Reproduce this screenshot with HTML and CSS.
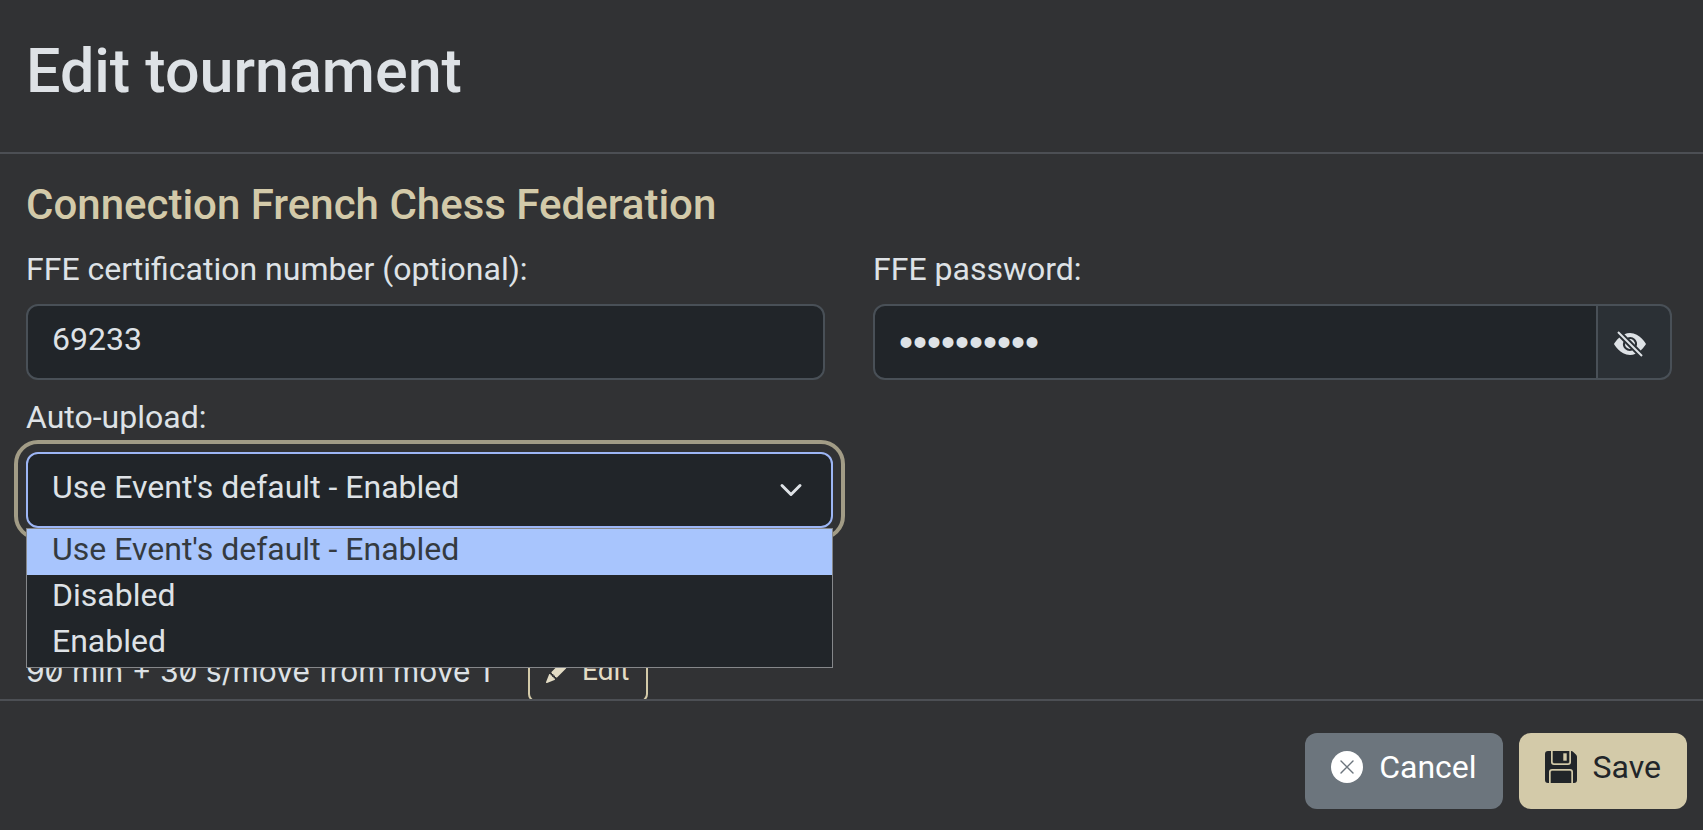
FILE: index.html
```html
<!DOCTYPE html>
<html lang="en">
<head>
<meta charset="utf-8">
<title>Edit tournament</title>
<link rel="stylesheet" href="styles.css">
</head>
<body>
<form class="modal">
  <header class="modal-header">
    <h1 class="modal-title">Edit tournament</h1>
  </header>
  <main class="modal-body">
    <h2 class="section-title">Connection French Chess Federation</h2>
    <div class="row">
      <div class="field">
        <label class="label" for="ffe-id">FFE certification number (optional):</label>
        <input class="control" id="ffe-id" type="text" value="69233">
      </div>
      <div class="field">
        <label class="label" for="ffe-password">FFE password:</label>
        <div class="input-group">
          <input class="control control-password" id="ffe-password" type="password" value="abcdefghij">
          <button class="reveal" type="button" aria-label="Show password">
            <svg class="icon" viewBox="0 0 16 16" fill="currentColor" aria-hidden="true"><path d="m10.79 12.912-1.614-1.615a3.5 3.5 0 0 1-4.474-4.474l-2.06-2.06C.938 6.278 0 8 0 8s3 5.5 8 5.5a7 7 0 0 0 2.79-.588M5.21 3.088A7 7 0 0 1 8 2.5c5 0 8 5.5 8 5.5s-.939 1.721-2.641 3.238l-2.062-2.062a3.5 3.5 0 0 0-4.474-4.474z"/><path d="M5.525 7.646a2.5 2.5 0 0 0 2.829 2.829zm4.95.708-2.829-2.83a2.5 2.5 0 0 1 2.829 2.829zm3.171 6-12-12 .708-.708 12 12z"/></svg>
          </button>
        </div>
      </div>
    </div>
    <div class="select-field">
      <label class="label" for="auto-upload">Auto-upload:</label>
      <div class="select-wrap">
        <select class="control select" id="auto-upload">
          <option>Use Event's default - Enabled</option>
          <option>Disabled</option>
          <option>Enabled</option>
        </select>
        <svg class="chevron" viewBox="0 0 16 16" fill="none" stroke="currentColor" stroke-width="2" stroke-linecap="round" stroke-linejoin="round" aria-hidden="true"><path d="m2 5 6 6 6-6"/></svg>
        <ul class="menu" role="listbox" aria-label="Auto-upload">
          <li class="menu-item menu-item-active" role="option" aria-selected="true">Use Event's default - Enabled</li>
          <li class="menu-item" role="option" aria-selected="false">Disabled</li>
          <li class="menu-item" role="option" aria-selected="false">Enabled</li>
        </ul>
      </div>
    </div>
    <div class="time-row">
      <span class="time-control">90 min + 30 s/move from move 1</span>
      <button class="edit" type="button">
        <svg class="edit-icon" viewBox="0 0 16 16" fill="currentColor" aria-hidden="true"><path d="M12.854.146a.5.5 0 0 0-.707 0L10.5 1.793 14.207 5.5l1.647-1.646a.5.5 0 0 0 0-.708zm.646 6.061L9.793 2.5 3.293 9H3.5a.5.5 0 0 1 .5.5v.5h.5a.5.5 0 0 1 .5.5v.5h.5a.5.5 0 0 1 .5.5v.5h.5a.5.5 0 0 1 .5.5v.207zm-7.468 7.468A.5.5 0 0 1 6 13.5V13h-.5a.5.5 0 0 1-.5-.5V12h-.5a.5.5 0 0 1-.5-.5V11h-.5a.5.5 0 0 1-.5-.5V10h-.5a.5.5 0 0 1-.175-.032l-.179.178a.5.5 0 0 0-.11.168l-2 5a.5.5 0 0 0 .65.65l5-2a.5.5 0 0 0 .168-.11z"/></svg>
        Edit
      </button>
    </div>
  </main>
  <footer class="modal-footer">
    <button class="button button-cancel" type="button">
      <svg class="icon" viewBox="0 0 16 16" aria-hidden="true"><circle cx="8" cy="8" r="8" fill="currentColor"/><path d="m5 5 6 6m0-6-6 6" stroke="#6c757d" stroke-width=".7" stroke-linecap="round"/></svg>
      Cancel
    </button>
    <button class="button button-save" type="submit">
      <svg class="icon" viewBox="0 0 16 16" fill="currentColor" aria-hidden="true"><path d="M0 1.500A1.500 1.500 0 0 1 1.500 0H3v5.500A1.500 1.500 0 0 0 4.500 7h7A1.500 1.500 0 0 0 13 5.500V0h.086a1.500 1.500 0 0 1 1.060.44l1.415 1.414A1.500 1.500 0 0 1 16 2.914V14.500a1.500 1.500 0 0 1-1.500 1.500H14v-5.500A1.500 1.500 0 0 0 12.500 9h-9A1.500 1.500 0 0 0 2 10.500V16h-.5A1.500 1.500 0 0 1 0 14.500z"/><path d="M3 16h10v-5.500a.5.5 0 0 0-.5-.5h-9a.5.5 0 0 0-.5.5zm9-16H4v5.500a.5.5 0 0 0 .5.5h7a.5.5 0 0 0 .5-.5zM9 1h2v4H9z" stroke="currentColor" stroke-width=".3"/></svg>
      Save
    </button>
  </footer>
</form>
</body>
</html>
```
FILE: styles.css
```css
* {
  box-sizing: border-box;
}

body {
  margin: 0;
  background: #313234;
  color: #dee2e6;
  font-family: Roboto, "Liberation Sans", sans-serif;
  font-size: 32px;
  line-height: 48px;
}

button,
input,
select {
  font: inherit;
  color: inherit;
  margin: 0;
}

.modal {
  display: flex;
  flex-direction: column;
  height: 100vh;
}

.modal-header {
  padding: 31px 26px 41px;
  border-bottom: 2px solid #4c4f54;
}

.modal-title {
  margin: 0;
  font-size: 61px;
  font-weight: 500;
  line-height: 80px;
}

.modal-body {
  flex: 1;
  min-height: 0;
  overflow: hidden;
  padding: 26px 31px 0 26px;
}

.section-title {
  margin: 0 0 15px;
  color: #d3caa9;
  font-size: 42px;
  font-weight: 500;
  line-height: 50px;
}

.row {
  display: grid;
  grid-template-columns: 1fr 1fr;
  gap: 48px;
  margin-bottom: 13px;
}

.label {
  display: block;
  margin-bottom: 11px;
}

.control {
  display: block;
  width: 100%;
  height: 76px;
  padding: 8px 24px 14px;
  border: 2px solid #495057;
  border-radius: 12px;
  background: #212529;
  outline: 0;
}

.input-group {
  display: flex;
}

.control-password {
  flex: 1;
  min-width: 0;
  padding: 10px 24px;
  border-radius: 12px 0 0 12px;
  font-family: "Liberation Sans", sans-serif;
  font-size: 40px;
}

.reveal {
  display: flex;
  align-items: center;
  padding: 4px 24px 0 16px;
  border: 2px solid #495057;
  border-left: 0;
  border-radius: 0 12px 12px 0;
  background: #2b3035;
}

.icon {
  width: 32px;
  height: 32px;
}

.select-field {
  width: 49%;
}

.select-wrap {
  position: relative;
}

.select {
  appearance: none;
  border-color: #9db6f5;
  outline: 4px solid #a29c86;
  outline-offset: 8px;
}

.chevron {
  position: absolute;
  top: 26px;
  right: 30px;
  width: 24px;
  height: 24px;
  pointer-events: none;
}

.menu {
  position: absolute;
  top: 100%;
  left: 0;
  right: 0;
  margin: 0;
  padding: 0;
  border: 1px solid #85878a;
  background: #212529;
  list-style: none;
}

.menu-item {
  padding: 0 25px 6px;
  line-height: 40px;
}

.menu-item-active {
  background: #a8c5fd;
  color: #343a40;
}

.time-row {
  display: flex;
  align-items: center;
  gap: 37px;
  margin-top: 112px;
}

.time-control {
  font-family: Inter, Roboto, sans-serif;
  font-size: 30px;
  font-feature-settings: "zero";
}

.edit {
  display: flex;
  align-items: center;
  gap: 12px;
  height: 62px;
  padding: 0 16px;
  border: 2px solid #d3caa9;
  border-radius: 8px;
  background: transparent;
  color: #e3dcc5;
  font-size: 28px;
}

.edit-icon {
  width: 24px;
  height: 24px;
}

.modal-footer {
  display: flex;
  justify-content: flex-end;
  gap: 16px;
  padding: 32px 16px 21px;
  border-top: 2px solid #4c4f54;
}

.button {
  display: flex;
  align-items: center;
  gap: 16px;
  height: 76px;
  padding: 0 26px 8px;
  border: 0;
  border-radius: 12px;
}

.button-cancel {
  background: #6c757d;
  color: #fff;
}

.button-save {
  background: #d3caa9;
  color: #212529;
}
```
